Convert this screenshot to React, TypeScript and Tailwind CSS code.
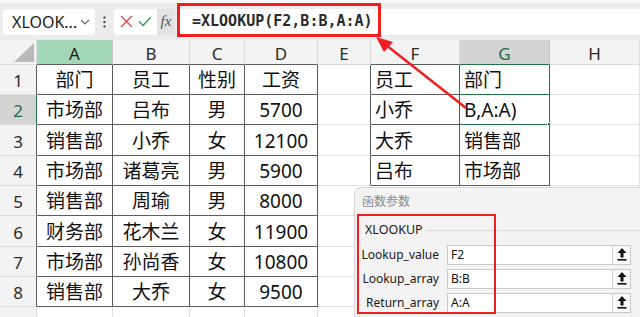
import React from "react";

const colW = ["w-[37px]", "w-[76px]", "w-[77px]", "w-[55px]", "w-[73px]", "w-[53px]", "w-[89px]", "w-[90px]", "w-[90px]"];
const rowH = ["h-[30px]", "h-[30px]", "h-[31px]", "h-[30px]", "h-[30px]", "h-[31px]", "h-[30px]", "h-[30px]", "h-[30px]"];
const heads = ["", "A", "B", "C", "D", "E", "F", "G", "H"];

const data: string[][] = [
  ["部门", "员工", "性别", "工资", "", "员工", "部门", ""],
  ["市场部", "吕布", "男", "5700", "", "小乔", "B,A:A)", ""],
  ["销售部", "小乔", "女", "12100", "", "大乔", "销售部", ""],
  ["市场部", "诸葛亮", "男", "5900", "", "吕布", "市场部", ""],
  ["销售部", "周瑜", "男", "8000", "", "", "", ""],
  ["财务部", "花木兰", "女", "11900", "", "", "", ""],
  ["市场部", "孙尚香", "女", "10800", "", "", "", ""],
  ["销售部", "大乔", "女", "9500", "", "", "", ""],
  ["", "", "", "", "", "", "", ""],
];

const FONT = { fontFamily: '"Noto Sans", "Noto Sans CJK SC", sans-serif' };

function UploadIcon() {
  return (
    <svg width="10" height="13" viewBox="0 0 10 13">
      <path d="M5 0 L9.5 5 L6.5 5 L6.5 9.5 L3.5 9.5 L3.5 5 L0.5 5 Z" fill="#111" />
      <rect x="0.5" y="11" width="9" height="1.6" fill="#111" />
    </svg>
  );
}

function HeaderRow() {
  return (
    <div className="flex h-[25px]">
      {heads.map((h, c) => {
        let cls = "flex items-center justify-center pt-[4px] border-r border-b text-[17px] ";
        if (c === 0) {
          cls += "bg-[#f3f3f3] border-r-[#dcdcdc] border-b-[#dcdcdc] relative";
        } else if (c === 1) {
          cls += "bg-[#a2d8b8] text-[#1c1c1c] border-r-[#c6c6c6] border-b-[#5c5c5c]";
        } else if (c === 7) {
          cls += "bg-[#d4d4d4] text-[#1e6b3f] border-r-[#c6c6c6] border-b-[#217346]";
        } else if (c >= 2 && c <= 4) {
          cls += "bg-[#f3f3f3] text-[#2a2a2a] border-r-[#dcdcdc] border-b-[#5c5c5c]";
        } else if (c === 6) {
          cls += "bg-[#f3f3f3] text-[#2a2a2a] border-r-[#dcdcdc] border-b-[#5c5c5c]";
        } else {
          cls += "bg-[#f3f3f3] text-[#2a2a2a] border-r-[#dcdcdc] border-b-[#dcdcdc]";
        }
        return (
          <div key={c} className={colW[c] + " shrink-0 " + cls}>
            {c === 0 ? (
              <svg className="absolute right-[2px] bottom-[2px]" width="20" height="19" viewBox="0 0 20 19">
                <path d="M20 0 L20 19 L0 19 Z" fill="#b9b9b9" />
              </svg>
            ) : (
              h
            )}
          </div>
        );
      })}
    </div>
  );
}

function cellClass(r: number, c: number): string {
  const inData = r >= 1 && r <= 8;
  const inLookup = r >= 1 && r <= 4;
  let right = "border-r-[#e1e1e1]";
  let bottom = "border-b-[#e1e1e1]";
  if (c === 0) {
    right = inData ? "border-r-[#5c5c5c]" : "border-r-[#dcdcdc]";
    bottom = "border-b-[#dcdcdc]";
    if (r === 2) right = "border-r-[#217346]";
  }
  if (c >= 1 && c <= 4 && inData) {
    right = "border-r-[#5c5c5c]";
    bottom = "border-b-[#5c5c5c]";
  }
  if (c === 5 && inLookup) right = "border-r-[#5c5c5c]";
  if ((c === 6 || c === 7) && inLookup) {
    right = "border-r-[#5c5c5c]";
    bottom = "border-b-[#5c5c5c]";
  }
  if (c === 6 && (r === 1 || r === 2)) right = "border-r-[#217346]";
  if (c === 7 && (r === 1 || r === 2)) {
    right = "border-r-[#217346]";
    bottom = "border-b-[#217346]";
  }
  return "border-r border-b " + right + " " + bottom;
}

function Row({ r }: { r: number }) {
  const vals = data[r - 1];
  return (
    <div className={"flex " + rowH[r - 1]}>
      {heads.map((_, c) => {
        if (c === 0) {
          const sel = r === 2;
          return (
            <div
              key={c}
              className={
                colW[c] +
                " shrink-0 flex items-center justify-center pt-[3px] text-[17px] " +
                (sel ? "bg-[#d4d4d4] text-[#1e6b3f] " : "bg-[#f3f3f3] text-[#2a2a2a] ") +
                cellClass(r, c)
              }
            >
              {r}
            </div>
          );
        }
        const v = vals[c - 1] || "";
        const left = c >= 6;
        return (
          <div
            key={c}
            className={
              colW[c] +
              " shrink-0 relative flex items-center pt-[2px] bg-white text-[19px] text-[#111] whitespace-nowrap " +
              (left ? "justify-start pl-[4px] " : "justify-center ") +
              cellClass(r, c)
            }
          >
            {v}
            {c === 7 && r === 2 ? (
              <div className="absolute right-[-3px] bottom-[-3px] w-[5px] h-[5px] bg-[#217346] border border-white" />
            ) : null}
          </div>
        );
      })}
    </div>
  );
}

export default function App() {
  return (
    <div className="relative w-[640px] h-[317px] overflow-hidden bg-white" style={FONT}>
      {/* toolbar */}
      <div className="h-[40px] bg-[#ececec] border-t-[3px] border-[#f7f7f7] flex items-center">
        <div className="ml-[3px] w-[92px] h-[26px] bg-white rounded-[4px] flex items-center pl-[9px] pr-[5px] text-[16px] text-[#1a1a1a]">
          <span className="flex-1">XLOOK...</span>
          <svg width="10" height="6" viewBox="0 0 10 6">
            <path d="M1 1 L5 5 L9 1" stroke="#666" strokeWidth="1.1" fill="none" />
          </svg>
        </div>
        <div className="w-[19px] flex justify-center">
          <svg width="3" height="12" viewBox="0 0 3 12">
            <circle cx="1.5" cy="1.5" r="1.2" fill="#555" />
            <circle cx="1.5" cy="6" r="1.2" fill="#555" />
            <circle cx="1.5" cy="10.5" r="1.2" fill="#555" />
          </svg>
        </div>
        <div className="h-[26px] w-[61px] bg-white rounded-l-[4px] flex items-stretch">
          <div className="w-[43px] flex items-center justify-around px-[3px]">
            <svg width="13" height="13" viewBox="0 0 13 13">
              <path d="M1 1 L12 12 M12 1 L1 12" stroke="#e4454a" strokeWidth="1.3" />
            </svg>
            <svg width="14" height="11" viewBox="0 0 14 11">
              <path d="M1 5.5 L5 9.5 L13 1" stroke="#2e9b58" strokeWidth="1.3" fill="none" />
            </svg>
          </div>
          <div className="w-[18px] bg-[#e3e3e3] flex items-center justify-center text-[15px] italic text-[#555]" style={{ fontFamily: '"Liberation Serif", serif' }}>
            fx
          </div>
        </div>
        <div className="ml-[3px] flex-1 h-[26px] bg-white flex items-center pl-[14px]">
          <span className="text-[15px] font-bold text-[#2a2a2a]" style={{ fontFamily: '"DejaVu Sans Mono", monospace' }}>
            =XLOOKUP(F2,B:B,A:A)
          </span>
        </div>
      </div>

      {/* sheet */}
      <div className="flex flex-col">
        <HeaderRow />
        {[1, 2, 3, 4, 5, 6, 7, 8, 9].map((r) => (
          <Row key={r} r={r} />
        ))}
      </div>

      {/* red annotation around formula */}
      <div className="absolute left-[177px] top-[3px] w-[204px] h-[34px] border-[3px] border-[#f01f1f] pointer-events-none" />

      {/* arrow */}
      <svg className="absolute left-0 top-0 pointer-events-none" width="640" height="317" viewBox="0 0 640 317">
        <line x1="466" y1="108" x2="386" y2="45" stroke="#f01f1f" strokeWidth="2.5" />
        <path d="M376 37 L393 42 L384 52 Z" fill="#f01f1f" />
      </svg>

      {/* function arguments dialog */}
      <div className="absolute left-[354px] top-[187px] w-[300px] h-[140px] bg-[#f3f3f3] border border-[#d6d6d6] rounded-tl-[7px]">
        <div className="h-[26px] pl-[7px] flex items-center text-[12px] text-[#8a8a8a]" style={{ fontFamily: '"Noto Sans CJK SC", sans-serif' }}>
          函数参数
        </div>
        <div className="mt-[7px] flex items-center pl-[10px]">
          <span className="text-[12.5px] text-[#1a1a1a]">XLOOKUP</span>
          <div className="flex-1 ml-[3px] h-px bg-[#d9d9d9]" />
        </div>
        <div className="mt-[5px] flex flex-col gap-[4px]">
          {[
            ["Lookup_value", "F2"],
            ["Lookup_array", "B:B"],
            ["Return_array", "A:A"],
            ["", ""],
          ].map(([label, val], i) => (
            <div key={i} className="flex items-center h-[20px]">
              <div className="w-[84px] text-right text-[12px] text-[#1a1a1a]">{label}</div>
              <div className="ml-[8px] w-[184px] h-[20px] bg-white border border-[#c9c9c9] flex items-stretch">
                <div className="flex-1 pl-[3px] flex items-center text-[12px] text-[#111]">{val}</div>
                <div className="w-[18px] border-l border-[#d0d0d0] bg-[#fafafa] flex items-center justify-center">
                  <UploadIcon />
                </div>
              </div>
            </div>
          ))}
        </div>
      </div>

      {/* red annotation around dialog params */}
      <div className="absolute left-[357px] top-[214px] w-[139px] h-[100px] border-2 border-[#f01f1f] pointer-events-none" />
    </div>
  );
}
